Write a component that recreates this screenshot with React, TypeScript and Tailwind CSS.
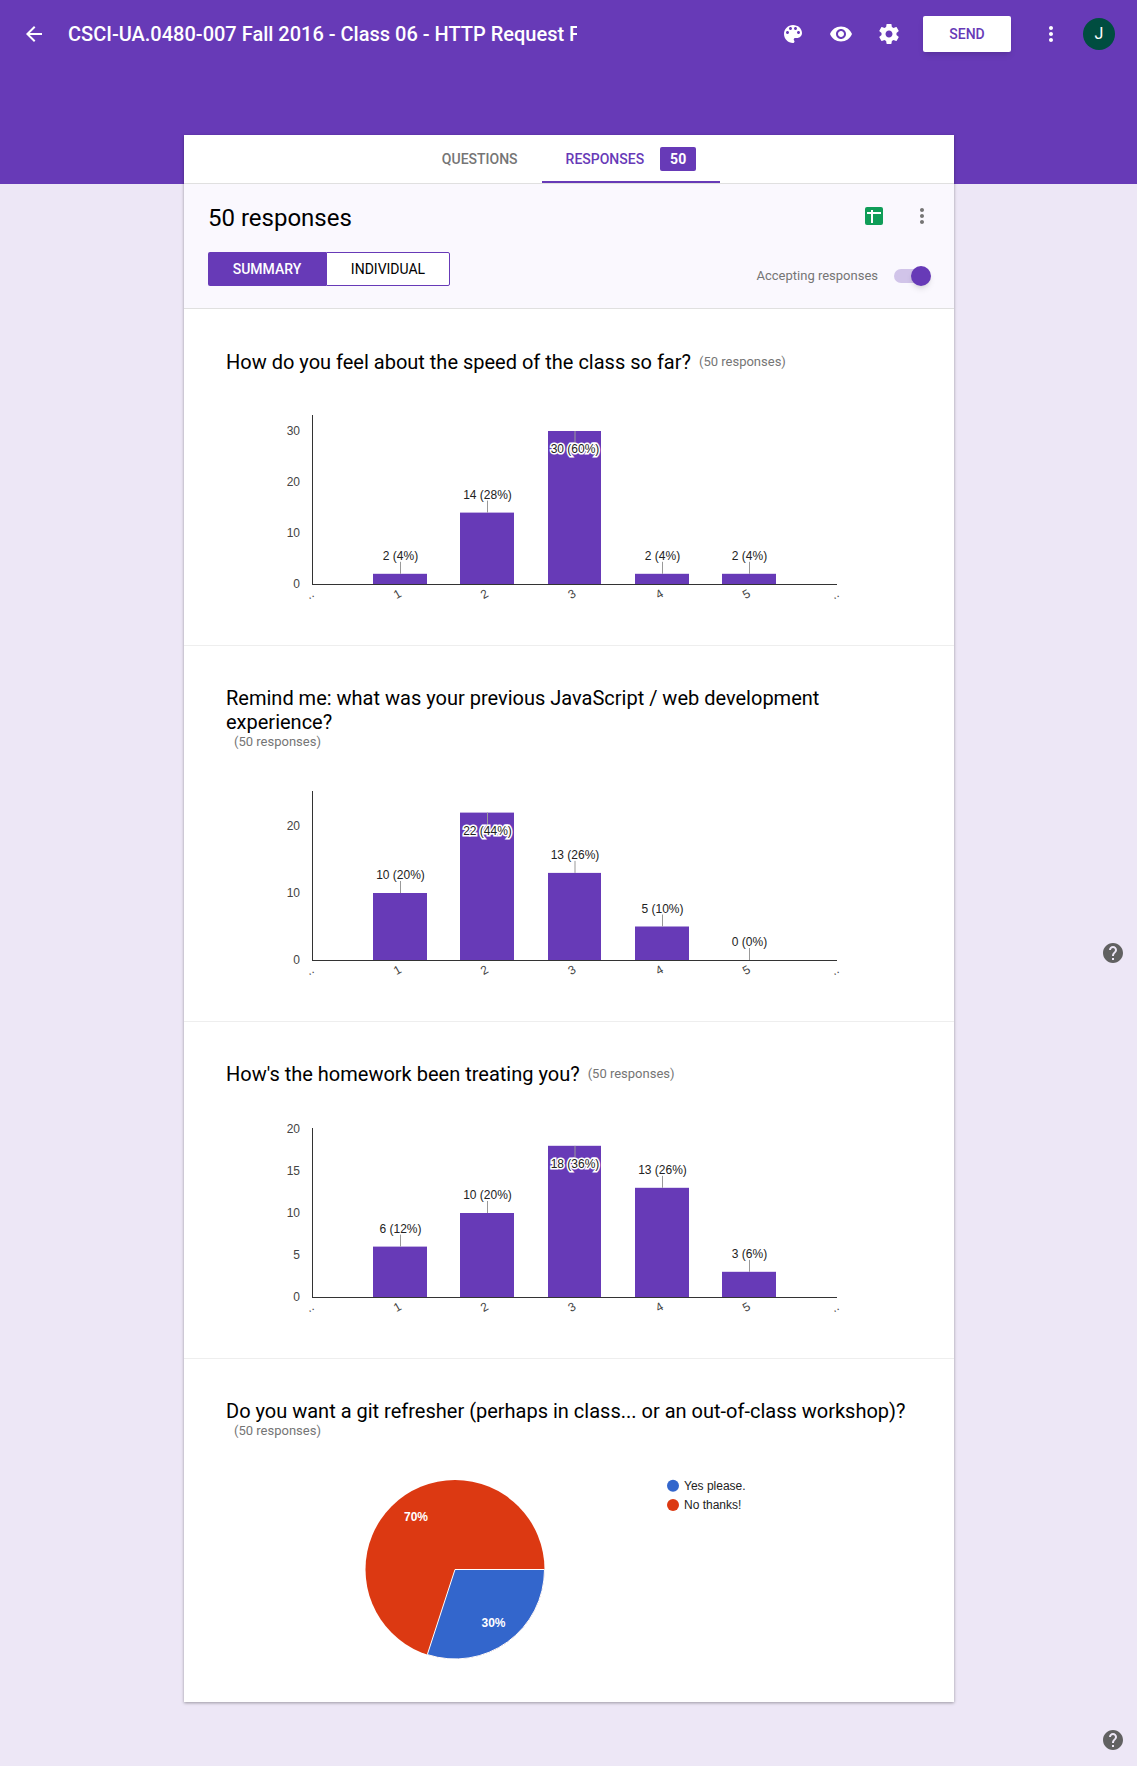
const PURPLE = "#673ab7";

const ICONS = {
  back: "M20 11H7.83l5.59-5.59L12 4l-8 8 8 8 1.41-1.41L7.83 13H20v-2z",
  palette:
    "M12 3c-4.97 0-9 4.03-9 9s4.03 9 9 9c.83 0 1.5-.67 1.5-1.5 0-.39-.15-.74-.39-1.01-.23-.26-.38-.61-.38-.99 0-.83.67-1.5 1.5-1.5H16c2.76 0 5-2.24 5-5 0-4.42-4.03-8-9-8zm-5.5 9c-.83 0-1.5-.67-1.5-1.5S5.67 9 6.5 9 8 9.67 8 10.5 7.33 12 6.5 12zm3-4C8.67 8 8 7.33 8 6.5S8.67 5 9.5 5s1.5.67 1.5 1.5S10.33 8 9.5 8zm5 0c-.83 0-1.5-.67-1.5-1.5S13.67 5 14.5 5s1.5.67 1.5 1.5S15.33 8 14.5 8zm3 4c-.83 0-1.5-.67-1.5-1.5S16.67 9 17.5 9s1.5.67 1.5 1.5-.67 1.5-1.5 1.5z",
  eye: "M12 4.5C7 4.5 2.73 7.61 1 12c1.73 4.39 6 7.5 11 7.5s9.27-3.11 11-7.5c-1.73-4.39-6-7.5-11-7.5zM12 17c-2.76 0-5-2.24-5-5s2.24-5 5-5 5 2.24 5 5-2.24 5-5 5zm0-8c-1.66 0-3 1.34-3 3s1.34 3 3 3 3-1.34 3-3-1.34-3-3-3z",
  gear: "M19.43 12.98c.04-.32.07-.64.07-.98s-.03-.66-.07-.98l2.11-1.65c.19-.15.24-.42.12-.64l-2-3.46c-.12-.22-.39-.3-.61-.22l-2.49 1c-.52-.4-1.08-.73-1.69-.98l-.38-2.65C14.46 2.18 14.25 2 14 2h-4c-.25 0-.46.18-.49.42l-.38 2.65c-.61.25-1.17.59-1.69.98l-2.49-1c-.23-.09-.49 0-.61.22l-2 3.46c-.13.22-.07.49.12.64l2.11 1.65c-.04.32-.07.65-.07.98s.03.66.07.98l-2.11 1.65c-.19.15-.24.42-.12.64l2 3.46c.12.22.39.3.61.22l2.49-1c.52.4 1.08.73 1.69.98l.38 2.65c.03.24.24.42.49.42h4c.25 0 .46-.18.49-.42l.38-2.65c.61-.25 1.17-.59 1.69-.98l2.49 1c.23.09.49 0 .61-.22l2-3.46c.12-.22.07-.49-.12-.64l-2.11-1.65zM12 15.5c-1.93 0-3.5-1.57-3.5-3.5s1.57-3.5 3.5-3.5 3.5 1.57 3.5 3.5-1.57 3.5-3.5 3.5z",
  dots: "M12 8c1.1 0 2-.9 2-2s-.9-2-2-2-2 .9-2 2 .9 2 2 2zm0 2c-1.1 0-2 .9-2 2s.9 2 2 2 2-.9 2-2-.9-2-2-2zm0 6c-1.1 0-2 .9-2 2s.9 2 2 2 2-.9 2-2-.9-2-2-2z",
  help: "M12 2C6.48 2 2 6.48 2 12s4.48 10 10 10 10-4.48 10-10S17.52 2 12 2zm1 17h-2v-2h2v2zm2.07-7.75l-.9.92C13.45 12.9 13 13.5 13 15h-2v-.5c0-1.1.45-2.1 1.17-2.83l1.24-1.26c.37-.36.59-.86.59-1.41 0-1.1-.9-2-2-2s-2 .9-2 2H8c0-2.21 1.79-4 4-4s4 1.79 4 4c0 .88-.36 1.68-.93 2.25z",
};

function Icon({ d, className }: { d: string; className?: string }) {
  return (
    <svg viewBox="0 0 24 24" className={className} fill="currentColor">
      <path d={d} />
    </svg>
  );
}

type Bar = { value: number; label: string; inside?: boolean };

const BAR_X = [373, 460, 548, 635, 722];
const BAR_W = [54, 54, 53, 54, 54];
const CHART_FONT = "'Liberation Sans', Arial, sans-serif";

// plot area: y axis at x=42.5, baseline at y=174, same as google charts output
function BarChart({ bars, ticks, unit, className }: { bars: Bar[]; ticks: number[]; unit: number; className?: string }) {
  const baseY = 174;
  return (
    <svg width="600" height="200" className={"block " + (className ?? "")} fontFamily={CHART_FONT} fontSize="12">
      {ticks.map((t) => (
        <text key={t} x="30" y={baseY - t * unit + 4} textAnchor="end" fill="#444">
          {t}
        </text>
      ))}
      {bars.map((b, i) => {
        const x = BAR_X[i] - 270;
        const w = BAR_W[i];
        const top = baseY - b.value * unit;
        const mid = x + w / 2 + 0.5;
        return (
          <g key={i}>
            <rect x={x} y={top} width={w} height={b.value * unit} fill={PURPLE} />
            {b.inside ? (
              <>
                <line x1={mid} x2={mid} y1={top} y2={top + 12} stroke="#999" />
                <text x={mid} y={top + 22} textAnchor="middle" fill="#222" stroke="#fff" strokeWidth="3" paintOrder="stroke">
                  {b.label}
                </text>
              </>
            ) : (
              <>
                <line x1={mid} x2={mid} y1={top - 12} y2={top} stroke="#999" />
                <text x={mid} y={top - 14} textAnchor="middle" fill="#222">
                  {b.label}
                </text>
              </>
            )}
            <text x={mid - 3} y={baseY + 14} textAnchor="middle" fontSize="12" fill="#444" transform={`rotate(-30 ${mid - 3} ${baseY + 10})`}>
              {i + 1}
            </text>
          </g>
        );
      })}
      <line x1="42.5" x2="42.5" y1="5" y2={baseY} stroke="#333" />
      <line x1="42" x2="567" y1={baseY + 0.5} y2={baseY + 0.5} stroke="#333" />
      <text x="41" y={baseY + 14} textAnchor="middle" fontSize="12" fill="#444" transform={`rotate(-30 41 ${baseY + 12})`}>
        ..
      </text>
      <text x="566" y={baseY + 14} textAnchor="middle" fontSize="12" fill="#444" transform={`rotate(-30 566 ${baseY + 12})`}>
        ..
      </text>
    </svg>
  );
}

function PieChart() {
  return (
    <svg width="600" height="222" className="block ml-[44px] mt-[21px]" fontFamily={CHART_FONT} fontSize="12">
      <circle cx="185" cy="109.5" r="89.5" fill="#dc3912" />
      <path d="M185 109.5 L274.5 109.5 A89.5 89.5 0 0 1 157.3 194.6 Z" fill="#3366cc" stroke="#fff" strokeWidth="1" />
      <text x="146" y="61" textAnchor="middle" fill="#fff" fontWeight="bold">70%</text>
      <text x="223.5" y="167" textAnchor="middle" fill="#fff" fontWeight="bold">30%</text>
      <circle cx="403" cy="25.7" r="6" fill="#3366cc" />
      <text x="414" y="29.5" fill="#222">Yes please.</text>
      <circle cx="403" cy="45" r="6" fill="#dc3912" />
      <text x="414" y="48.5" fill="#222">No thanks!</text>
    </svg>
  );
}

function Question({ title, pt, last, children }: { title: string; pt: string; last?: boolean; children: React.ReactNode }) {
  return (
    <section className={pt + " px-[42px] " + (last ? "pb-[20px]" : "border-b border-[#eeeeee]")}>
      <div className="flex flex-wrap items-center">
        <h2 className="text-[20px] leading-6 text-black font-normal">{title}</h2>
        <span className="ml-2 text-[13px] leading-4 text-[#757575]">(50 responses)</span>
      </div>
      {children}
    </section>
  );
}

export default function App() {
  return (
    <div className="relative min-h-screen bg-[#ede7f6] font-['Roboto',sans-serif]">
      {/* Purple header */}
      <div className="h-[184px] bg-[#673ab7] text-white">
        <div className="flex items-center h-[68px] pl-[22px] pr-[22px]">
          <Icon d={ICONS.back} className="w-6 h-6 shrink-0" />
          <div className="ml-[22px] w-[509px] overflow-hidden whitespace-nowrap text-[20px] font-medium">
            CSCI-UA.0480-007 Fall 2016 - Class 06 - HTTP Request Form
          </div>
          <div className="ml-auto flex items-center">
            <Icon d={ICONS.palette} className="w-6 h-6" />
            <Icon d={ICONS.eye} className="w-6 h-6 ml-6" />
            <Icon d={ICONS.gear} className="w-6 h-6 ml-6" />
            <button className="ml-[22px] w-[88px] h-9 bg-white rounded-[2px] shadow-md text-[14px] font-medium text-[#673ab7]">SEND</button>
            <Icon d={ICONS.dots} className="w-6 h-6 ml-7" />
            <div className="ml-5 w-8 h-8 rounded-full bg-[#004d40] flex items-center justify-center text-[16px]">J</div>
          </div>
        </div>
      </div>

      {/* Card */}
      <div className="relative ml-[184px] -mt-[49px] w-[770px] bg-white shadow-[0_1px_3px_rgba(0,0,0,0.35)]">
        <div className="flex justify-center h-[49px] border-b border-[#e0e0e0] text-[14px] font-medium">
          <div className="px-6 flex items-center text-[#757575]">QUESTIONS</div>
          <div className="px-6 flex items-center gap-4 text-[#673ab7] border-y-2 border-t-transparent border-b-[#673ab7]">
            RESPONSES
            <span className="w-9 h-6 rounded-[2px] bg-[#673ab7] text-white font-bold flex items-center justify-center">50</span>
          </div>
        </div>

        {/* Summary panel */}
        <div className="h-[125px] bg-[#faf8fe] border-b border-[#e0e0e0] pl-6 pr-6">
          <div className="flex items-center justify-between h-[68px]">
            <h1 className="text-[24px] leading-8 text-black font-normal">50 responses</h1>
            <div className="flex items-center -mt-[5px]">
              <div className="relative w-[18px] h-[18px] bg-[#0f9d58] rounded-[2px]">
                <div className="absolute left-[6px] top-[3px] w-[1.5px] h-[13px] bg-white" />
                <div className="absolute left-[2px] top-[5.5px] w-[14px] h-[1.5px] bg-white" />
              </div>
              <Icon d={ICONS.dots} className="w-6 h-6 ml-[27px] -mr-[4px] text-[#757575]" />
            </div>
          </div>
          <div className="flex items-center justify-between">
            <div className="flex h-[34px] text-[14px] font-medium">
              <div className="w-[118px] bg-[#673ab7] text-white rounded-l-[2px] flex items-center justify-center">SUMMARY</div>
              <div className="w-[124px] bg-white text-black border border-[#673ab7] rounded-r-[2px] flex items-center justify-center font-normal">INDIVIDUAL</div>
            </div>
            <div className="flex items-center mt-[14px] mr-[2px] text-[13px] text-[#757575]">
              Accepting responses
              <div className="relative ml-4 w-[34px] h-[14px] rounded-full bg-[#d1c4e9]">
                <div className="absolute -right-[3px] -top-[3px] w-5 h-5 rounded-full bg-[#673ab7] shadow-md" />
              </div>
            </div>
          </div>
        </div>

        <Question title="How do you feel about the speed of the class so far?" pt="pt-[41px]">
          <BarChart
            className="ml-[44px] mt-[36px] mb-[35px]"
            unit={5.1}
            ticks={[0, 10, 20, 30]}
            bars={[
              { value: 2, label: "2 (4%)" },
              { value: 14, label: "14 (28%)" },
              { value: 30, label: "30 (60%)", inside: true },
              { value: 2, label: "2 (4%)" },
              { value: 2, label: "2 (4%)" },
            ]}
          />
        </Question>
        <Question title="Remind me: what was your previous JavaScript / web development experience?" pt="pt-[40px]">
          <BarChart
            className="ml-[44px] mt-[36px] mb-[35px]"
            unit={6.7}
            ticks={[0, 10, 20]}
            bars={[
              { value: 10, label: "10 (20%)" },
              { value: 22, label: "22 (44%)", inside: true },
              { value: 13, label: "13 (26%)" },
              { value: 5, label: "5 (10%)" },
              { value: 0, label: "0 (0%)" },
            ]}
          />
        </Question>
        <Question title="How's the homework been treating you?" pt="pt-[40px]">
          <BarChart
            className="ml-[44px] mt-[37px] mb-[35px]"
            unit={8.4}
            ticks={[0, 5, 10, 15, 20]}
            bars={[
              { value: 6, label: "6 (12%)" },
              { value: 10, label: "10 (20%)" },
              { value: 18, label: "18 (36%)", inside: true },
              { value: 13, label: "13 (26%)" },
              { value: 3, label: "3 (6%)" },
            ]}
          />
        </Question>
        <Question title="Do you want a git refresher (perhaps in class... or an out-of-class workshop)?" pt="pt-[40px]" last>
          <PieChart />
        </Question>
      </div>

      {/* Floating help buttons */}
      <Icon d={ICONS.help} className="absolute left-[1101px] top-[941px] w-6 h-6 text-[#616161]" />
      <Icon d={ICONS.help} className="absolute left-[1101px] top-[1728px] w-6 h-6 text-[#616161]" />
    </div>
  );
}
